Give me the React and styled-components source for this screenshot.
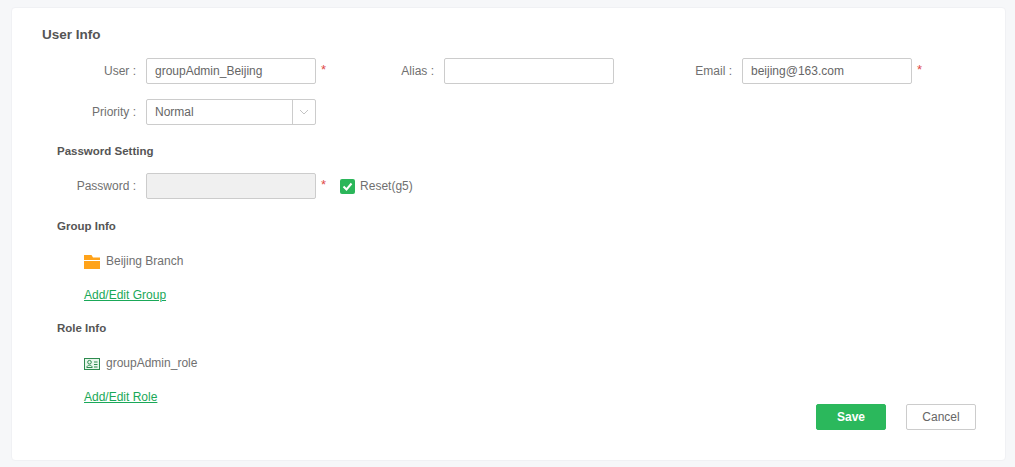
import React from 'react';
import styled, { createGlobalStyle } from 'styled-components';

const Global = createGlobalStyle`
  html, body { margin: 0; padding: 0; background: #f6f7f9; }
  body { font-family: "Liberation Sans", Arial, sans-serif; font-size: 12px; color: #666; }
`;

const Page = styled.div`
  width: 1015px;
  height: 467px;
  padding: 7px 9px 6px 11px;
  box-sizing: border-box;
  overflow: hidden;
`;

const Card = styled.div`
  height: 454px;
  box-sizing: border-box;
  background: #fff;
  border: 1px solid #f0f1f4;
  border-radius: 4px;
  padding: 18px 29px 29px 30px;
`;

const Title = styled.h2`
  margin: 0 0 14px;
  font-size: 13.5px;
  line-height: 18px;
  font-weight: 700;
  color: #555;
`;

const Row = styled.div`
  display: flex;
  height: 26px;
  margin-bottom: ${p => p.$gap || 0}px;
`;

const Field = styled.div`
  width: 298px;
  flex: none;
  display: flex;
  align-items: center;
`;

const Label = styled.label`
  width: 94px;
  flex: none;
  margin-right: 10px;
  text-align: right;
  color: #707070;
`;

const Input = styled.div`
  width: 170px;
  height: 26px;
  flex: none;
  box-sizing: border-box;
  border: 1px solid #ccc;
  border-radius: 2px;
  padding: 0 8px;
  line-height: 24px;
  color: #666;
  background: ${p => (p.$disabled ? '#f0f0f0' : '#fff')};
`;

const Star = styled.span`
  margin: -4px 0 0 5px;
  color: #e04a4a;
  font-size: 13px;
`;

const SelectBox = styled(Input)`
  display: flex;
  padding: 0 0 0 8px;
`;

const SelectValue = styled.span`
  flex: 1;
`;

const Arrow = styled.span`
  width: 22px;
  border-left: 1px solid #ccc;
  display: flex;
  align-items: center;
  justify-content: center;
`;

const Section = styled.h3`
  margin: ${p => p.$top}px 0 ${p => p.$bottom}px 15px;
  font-size: 11.5px;
  line-height: 16px;
  font-weight: 700;
  color: #555;
`;

const CheckWrap = styled.div`
  display: flex;
  flex: none;
  align-items: center;
  gap: 5px;
  margin: 0 0 0 14px;
  color: #707070;
  white-space: nowrap;
`;

const CheckBox = styled.span`
  width: 15px;
  height: 15px;
  border-radius: 2px;
  background: #2bb65a;
  display: flex;
  align-items: center;
  justify-content: center;
`;

const Item = styled.div`
  display: flex;
  align-items: center;
  gap: 6px;
  height: 16px;
  margin-left: 42px;
  color: #707070;
  line-height: 16px;
`;

const ItemIcon = styled.svg`
  width: 16px;
  height: 16px;
  flex: none;
`;

const LinkText = styled.a`
  display: block;
  margin: ${p => p.$top || 0}px 0 0 42px;
  color: #1aa858;
  line-height: 16px;
  text-decoration: underline;
`;

const Bottom = styled.div`
  display: flex;
  justify-content: space-between;
  align-items: flex-start;
  margin-top: 18px;
`;

const Actions = styled.div`
  display: flex;
  gap: 20px;
  margin-top: 15px;
`;

const Btn = styled.button`
  width: 70px;
  height: 26px;
  box-sizing: border-box;
  font: ${p => (p.$primary ? 700 : 400)} 12px "Liberation Sans", Arial, sans-serif;
  border-radius: 2px;
  padding: 0;
  border: 1px solid ${p => (p.$primary ? '#2bb85c' : '#ccc')};
  background: ${p => (p.$primary ? '#2bb85c' : '#fff')};
  color: ${p => (p.$primary ? '#fff' : '#666')};
`;

const FolderIcon = () => (
  <ItemIcon viewBox="0 0 16 16">
    <path fill="#ffa31a" d="M0 2h7.5l1.5 2.5h7V7H0z" />
    <path fill="#ffa31a" d="M0 8h16v8H0z" />
  </ItemIcon>
);

const RoleIcon = () => (
  <ItemIcon viewBox="0 0 16 16">
    <rect x="0.5" y="3.5" width="15" height="11" fill="#e9f6ec" stroke="#2e8b4f" />
    <circle cx="5.5" cy="7.2" r="1.8" fill="none" stroke="#2e8b4f" />
    <path d="M2.8 12.5c0-3 5.4-3 5.4 0z" fill="none" stroke="#2e8b4f" />
    <path d="M10 7h3.5M10 9.5h3.5M10 12h3.5" stroke="#2e8b4f" />
  </ItemIcon>
);

const App = () => (
  <Page>
    <Global />
    <Card>
      <Title>User Info</Title>
      <Row $gap={15}>
        <Field>
          <Label>User :</Label>
          <Input>groupAdmin_Beijing</Input>
          <Star>*</Star>
        </Field>
        <Field>
          <Label>Alias :</Label>
          <Input />
        </Field>
        <Field>
          <Label>Email :</Label>
          <Input>beijing@163.com</Input>
          <Star>*</Star>
        </Field>
      </Row>
      <Row>
        <Field>
          <Label>Priority :</Label>
          <SelectBox>
            <SelectValue>Normal</SelectValue>
            <Arrow>
              <svg width="10" height="6" viewBox="0 0 10 6">
                <path d="M1 1l4 4 4-4" fill="none" stroke="#c4c4c4" />
              </svg>
            </Arrow>
          </SelectBox>
        </Field>
      </Row>
      <Section $top={18} $bottom={14}>Password Setting</Section>
      <Row>
        <Field>
          <Label>Password :</Label>
          <Input $disabled />
          <Star>*</Star>
          <CheckWrap>
            <CheckBox>
              <svg width="11" height="9" viewBox="0 0 11 9">
                <path d="M1.5 4.5l3 3 5-6" fill="none" stroke="#fff" strokeWidth="2" />
              </svg>
            </CheckBox>
            Reset(g5)
          </CheckWrap>
        </Field>
      </Row>
      <Section $top={19} $bottom={19}>Group Info</Section>
      <Item><FolderIcon />Beijing Branch</Item>
      <LinkText $top={18}>Add/Edit Group</LinkText>
      <Section $top={17} $bottom={19}>Role Info</Section>
      <Item><RoleIcon />groupAdmin_role</Item>
      <Bottom>
        <LinkText>Add/Edit Role</LinkText>
        <Actions>
          <Btn $primary>Save</Btn>
          <Btn>Cancel</Btn>
        </Actions>
      </Bottom>
    </Card>
  </Page>
);

export default App;
